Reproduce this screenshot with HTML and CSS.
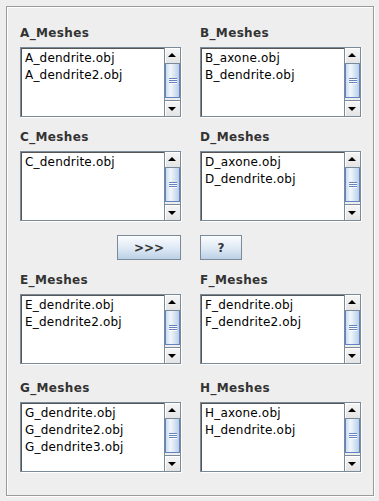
FILE: index.html
```html
<!DOCTYPE html>
<html lang="en">
<head>
    <meta charset="UTF-8">
    <title>Meshes</title>
    <link rel="stylesheet" href="styles.css">
</head>
<body>
    <div class="panel">
        <div class="grid">
            <div class="cell">
                <div class="title">A_Meshes</div>
                <div class="list">
                    <ul class="items">
                        <li>A_dendrite.obj</li>
                        <li>A_dendrite2.obj</li>
                    </ul>
                    <div class="vscroll">
                        <span class="arrow up"></span>
                        <span class="track"><span class="thumb"><i class="grip"></i></span></span>
                        <span class="arrow down"></span>
                    </div>
                </div>
            </div>
            <div class="cell">
                <div class="title">B_Meshes</div>
                <div class="list">
                    <ul class="items">
                        <li>B_axone.obj</li>
                        <li>B_dendrite.obj</li>
                    </ul>
                    <div class="vscroll">
                        <span class="arrow up"></span>
                        <span class="track"><span class="thumb"><i class="grip"></i></span></span>
                        <span class="arrow down"></span>
                    </div>
                </div>
            </div>
            <div class="cell">
                <div class="title">C_Meshes</div>
                <div class="list">
                    <ul class="items">
                        <li>C_dendrite.obj</li>
                    </ul>
                    <div class="vscroll">
                        <span class="arrow up"></span>
                        <span class="track"><span class="thumb"><i class="grip"></i></span></span>
                        <span class="arrow down"></span>
                    </div>
                </div>
            </div>
            <div class="cell">
                <div class="title">D_Meshes</div>
                <div class="list">
                    <ul class="items">
                        <li>D_axone.obj</li>
                        <li>D_dendrite.obj</li>
                    </ul>
                    <div class="vscroll">
                        <span class="arrow up"></span>
                        <span class="track"><span class="thumb"><i class="grip"></i></span></span>
                        <span class="arrow down"></span>
                    </div>
                </div>
            </div>

            <div class="actions left"><button class="btn wide">&gt;&gt;&gt;</button></div>
            <div class="actions right"><button class="btn small">?</button></div>

            <div class="cell">
                <div class="title">E_Meshes</div>
                <div class="list">
                    <ul class="items">
                        <li>E_dendrite.obj</li>
                        <li>E_dendrite2.obj</li>
                    </ul>
                    <div class="vscroll">
                        <span class="arrow up"></span>
                        <span class="track"><span class="thumb"><i class="grip"></i></span></span>
                        <span class="arrow down"></span>
                    </div>
                </div>
            </div>
            <div class="cell">
                <div class="title">F_Meshes</div>
                <div class="list">
                    <ul class="items">
                        <li>F_dendrite.obj</li>
                        <li>F_dendrite2.obj</li>
                    </ul>
                    <div class="vscroll">
                        <span class="arrow up"></span>
                        <span class="track"><span class="thumb"><i class="grip"></i></span></span>
                        <span class="arrow down"></span>
                    </div>
                </div>
            </div>
            <div class="cell lower">
                <div class="title">G_Meshes</div>
                <div class="list">
                    <ul class="items">
                        <li>G_dendrite.obj</li>
                        <li>G_dendrite2.obj</li>
                        <li>G_dendrite3.obj</li>
                    </ul>
                    <div class="vscroll">
                        <span class="arrow up"></span>
                        <span class="track"><span class="thumb"><i class="grip"></i></span></span>
                        <span class="arrow down"></span>
                    </div>
                </div>
            </div>
            <div class="cell lower">
                <div class="title">H_Meshes</div>
                <div class="list">
                    <ul class="items">
                        <li>H_axone.obj</li>
                        <li>H_dendrite.obj</li>
                    </ul>
                    <div class="vscroll">
                        <span class="arrow up"></span>
                        <span class="track"><span class="thumb"><i class="grip"></i></span></span>
                        <span class="arrow down"></span>
                    </div>
                </div>
            </div>
        </div>
    </div>
</body>
</html>
```

FILE: styles.css
```css
:root {
    --bg: #eeeeee;
    --edge: #7a8a99;
    --thumb-edge: #6382bf;
    --label: #333333;
}

* {
    box-sizing: border-box;
}

body {
    margin: 0;
    background: var(--bg);
    font-family: 'DejaVu Sans', Verdana, sans-serif;
    font-size: 12px;
    width: 379px;
    height: 501px;
    overflow: hidden;
}

/* etched border round the whole panel */
.panel {
    margin: 6px;
    width: 368px;
    height: 490px;
    border: 1px solid #9a9a9a;
    box-shadow: inset 1px 1px 0 #fff, 1px 1px 0 #fff;
    padding: 19px 12px 0 13px;
}

.grid {
    display: grid;
    grid-template-columns: 161px 161px;
    column-gap: 19px;
    row-gap: 13px;
}

.title {
    font-weight: bold;
    color: var(--label);
    line-height: 15px;
    height: 15px;
    margin-bottom: 6px;
    letter-spacing: 0.35px;
}

.cell.lower {
    margin-top: 4px;
}

.list {
    display: flex;
    height: 70px;
    border: 1px solid var(--edge);
    box-shadow: 1px 1px 0 #fff;
    background: #fff;
}

.items {
    flex: 1;
    margin: 0;
    padding: 1px 0 0 3px;
    list-style: none;
    line-height: 17px;
    color: #000;
    letter-spacing: 0.2px;
    border-top: 1px solid #555;
    border-left: 1px solid #555;
}

.vscroll {
    width: 16px;
    display: flex;
    flex-direction: column;
    border-left: 1px solid var(--edge);
    background: var(--bg);
}

.arrow {
    flex: none;
    height: 16px;
    position: relative;
    background: linear-gradient(#f6f6f6, #e4e4e4);
    box-shadow: inset 1px 1px 0 #fff;
}

.arrow.up {
    border-bottom: 1px solid var(--edge);
}

.arrow.down {
    border-top: 1px solid var(--edge);
}

.arrow::after {
    content: "";
    position: absolute;
    left: 3px;
    top: 5px;
    border-left: 4px solid transparent;
    border-right: 4px solid transparent;
}

.arrow.up::after {
    border-bottom: 4px solid #000;
}

.arrow.down::after {
    top: 6px;
    border-top: 4px solid #000;
}

.track {
    flex: 1;
    display: flex;
    padding-bottom: 2px;
}

.thumb {
    flex: 1;
    display: flex;
    align-items: center;
    justify-content: center;
    border: 1px solid var(--thumb-edge);
    border-top: none;
    background: linear-gradient(to right, #c8ddf2, #f2f6fb 35%, #dce8f5 60%, #b8cfe5);
}

.grip {
    width: 8px;
    height: 6px;
    background: repeating-linear-gradient(to bottom, var(--thumb-edge) 0 1px, #fff 1px 2px);
}

.actions {
    display: flex;
    margin-top: 1px;
}

.actions.left {
    justify-content: flex-end;
}

.btn {
    height: 25px;
    border: 1px solid var(--edge);
    background: linear-gradient(#fbfcfe, #dde8f4 55%, #bcd0e6);
    font-family: inherit;
    font-size: 12px;
    font-weight: bold;
    color: var(--label);
    padding: 0;
}

.btn.wide {
    width: 64px;
}

.btn.small {
    width: 42px;
}
```
